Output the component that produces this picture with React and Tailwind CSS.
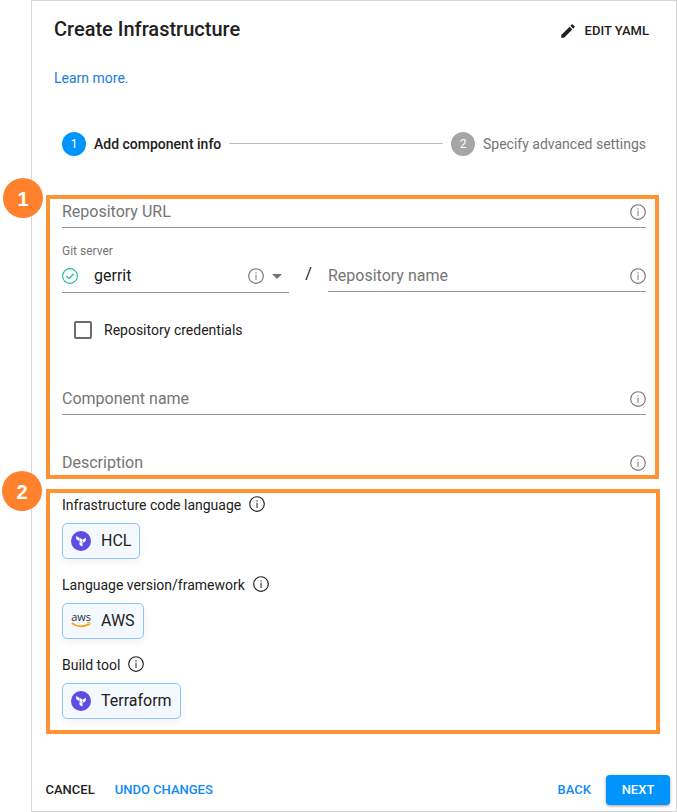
import React from "react";

function InfoIcon({ className = "text-[#757575]" }) {
  return (
    <svg viewBox="0 0 16 16" className={`size-4 shrink-0 ${className}`} fill="none">
      <circle cx="8" cy="8" r="7.3" stroke="currentColor" strokeWidth="1.15" />
      <path d="M8 6.7V12" stroke="currentColor" strokeWidth="1" />
      <path d="M8 4.2v1.2" stroke="currentColor" strokeWidth="1.1" />
    </svg>
  );
}

function CheckIcon() {
  return (
    <svg viewBox="0 0 16 16" className="size-4 shrink-0 text-[#18be94]" fill="none" stroke="currentColor">
      <circle cx="8" cy="8" r="7.4" strokeWidth="1.1" />
      <path d="M4.300 7.900l2.800 2.700 4.600-4.900" strokeWidth="1.3" />
    </svg>
  );
}

function TerraformIcon() {
  return (
    <svg viewBox="0 0 20 20" className="size-5 shrink-0">
      <circle cx="10" cy="10" r="10" fill="#5c4ee5" />
      <g fill="#fff">
        <path d="M5.2 4.9l3.1 1.8v3.4L5.2 8.3z" />
        <path d="M8.5 6.800l3 1.8v3.4l-3-1.8z" />
        <path d="M11.800 8.600l3-1.8v3.3l-3 1.9z" />
        <path d="M8.5 10.500l3 1.7v3.4l-3-1.7z" />
      </g>
    </svg>
  );
}

function AwsIcon() {
  return (
    <div className="flex h-5 w-5 shrink-0 flex-col items-center">
      <span className="h-[11px] font-['Open_Sans',sans-serif] text-[11px] leading-[11px] tracking-[-0.1px] text-[#252f3e]">
        aws
      </span>
      <svg viewBox="0 0 20 6" className="h-1.5 w-5 shrink-0" fill="none" stroke="#ff9900">
        <path d="M.8 1.200c5.400 3.800 12 3.800 17 .8" strokeWidth="1.6" />
        <path d="M16 .8c1.500-.4 2.800-.3 3 .1.200.6-.2 1.900-1 2.700" strokeWidth="1" />
      </svg>
    </div>
  );
}

function Field({ label, className = "" }) {
  return (
    <div className={`flex justify-between border-[#949494] ${className}`}>
      <span className="text-base leading-6 text-[#757575]">{label}</span>
      <InfoIcon className="mt-1 text-[#757575]" />
    </div>
  );
}

function Choice({ title, label, icon }) {
  return (
    <div className="flex h-20 flex-col items-start">
      <div className="flex h-[30px] items-start gap-2">
        <span className="pt-[2px] text-sm leading-5 text-[#212121]">{title}</span>
        <InfoIcon className="mt-[3px] text-[#212121]" />
      </div>
      <button className="flex h-9 items-center gap-2.5 rounded-[5px] border border-[#90c5fa] bg-[#f4f8ff] px-2 text-base text-[#212121] shadow-[0_3px_8px_rgba(0,0,0,0.06)]">
        {icon}
        <span>{label}</span>
      </button>
    </div>
  );
}

function Badge({ children, className }) {
  return (
    <div
      className={`absolute flex size-10 items-center justify-center rounded-full bg-[#ff812d] font-['Liberation_Sans',sans-serif] text-[20px] font-bold text-white ${className}`}
    >
      {children}
    </div>
  );
}

export default function App() {
  return (
    <div className="relative h-[812px] w-[677px] bg-white pl-[31px] font-[Roboto,sans-serif] text-[#212121]">
      <div className="flex h-full flex-col border border-[#d6d6d6]">
        <header className="flex h-14 shrink-0 items-center justify-between pr-[27px] pl-[22px]">
          <h1 className="text-[20px] leading-8 font-medium">Create Infrastructure</h1>
          <button className="mt-1 flex items-center gap-[7.500px] text-[13px] font-medium">
            <svg viewBox="0 0 24 24" className="size-[18px]" fill="currentColor">
              <path d="M3 17.250V21h3.750L17.810 9.940l-3.750-3.750L3 17.250zM20.710 7.040a1 1 0 0 0 0-1.410l-2.340-2.340a1 1 0 0 0-1.410 0l-1.830 1.830 3.750 3.750 1.830-1.830z" />
            </svg>
            EDIT YAML
          </button>
        </header>
        <div className="h-[75px] shrink-0 pt-[9px] pl-[22px]">
          <a className="text-sm leading-5 text-[#1a7bdc]">Learn more.</a>
        </div>
        <div className="flex h-[63px] shrink-0 items-start pr-[30px] pl-[30px]">
          <div className="flex items-center gap-2">
            <span className="flex size-6 items-center justify-center rounded-full bg-[#0094ff] text-xs text-white">1</span>
            <span className="text-sm font-medium">Add component info</span>
          </div>
          <div className="mx-2 mt-[11px] h-px flex-1 bg-[#bdbdbd]" />
          <div className="flex items-center gap-2">
            <span className="flex size-6 items-center justify-center rounded-full bg-[#a6a6a6] text-xs text-white">2</span>
            <span className="text-sm text-[#757575]">Specify advanced settings</span>
          </div>
        </div>

        <section className="ml-[14px] flex h-[284px] w-[613px] shrink-0 flex-col border-4 border-[#ff9233] pr-[9px] pl-3">
          <Field label="Repository URL" className="h-[29px] border-b pt-px" />
          <div className="flex h-[65px] items-start pt-[13px]">
            <div className="flex h-[52px] w-[227px] flex-col border-b border-[#949494]">
              <span className="h-[23px] text-xs leading-5 text-[#757575]">Git server</span>
              <div className="flex h-6 items-center">
                <CheckIcon />
                <span className="ml-4 flex-1 text-base">gerrit</span>
                <InfoIcon />
                <svg viewBox="0 0 10 5" className="mr-[7px] ml-2 h-[5px] w-2.5" fill="#757575">
                  <path d="M0 0h10L5 5z" />
                </svg>
              </div>
            </div>
            <span className="mt-[21px] w-[39px] text-center text-base leading-6">/</span>
            <Field label="Repository name" className="mt-[23px] h-[28px] flex-1 border-b" />
          </div>
          <label className="mt-[27px] ml-3 flex h-5 items-center gap-3 text-sm">
            <span className="size-[18px] rounded-[2px] border-2 border-[#6b6b6b]" />
            Repository credentials
          </label>
          <Field label="Component name" className="mt-[47px] h-[28px] border-b" />
          <Field label="Description" className="mt-9 h-6" />
        </section>

        <section className="mt-2.5 ml-[14px] h-[245px] w-[614px] shrink-0 border-4 border-[#ff9233] pl-3">
          <Choice title="Infrastructure code language" label="HCL" icon={<TerraformIcon />} />
          <Choice title="Language version/framework" label="AWS" icon={<AwsIcon />} />
          <Choice title="Build tool" label="Terraform" icon={<TerraformIcon />} />
        </section>

        <footer className="mt-[41px] flex h-[30px] shrink-0 items-center pr-1.5 pl-[13.5px] text-[13px] font-medium">
          <button>CANCEL</button>
          <button className="ml-5 text-[#0d8bf7]">UNDO CHANGES</button>
          <button className="mr-[15px] ml-auto text-[#0d8bf7]">BACK</button>
          <button className="h-[30px] w-16 rounded bg-[#0094ff] text-white shadow-[0_1px_3px_rgba(0,0,0,0.4)]">NEXT</button>
        </footer>
      </div>
      <Badge className="top-[178px] left-[3px] pt-px">1</Badge>
      <Badge className="top-[471px] left-[2px] pt-px">2</Badge>
    </div>
  );
}
